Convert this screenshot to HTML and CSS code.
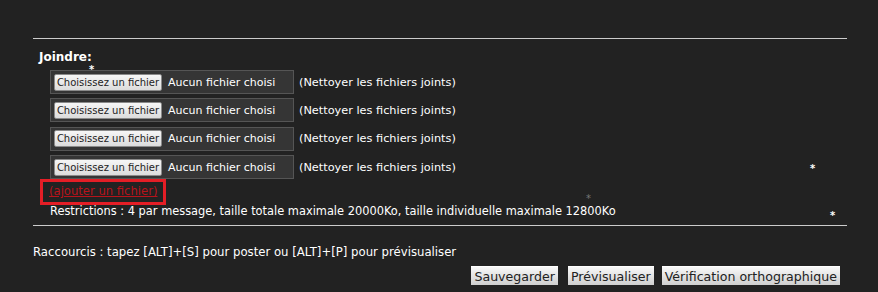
FILE: index.html
```html
<!DOCTYPE html>
<html lang="fr">
<head>
  <meta charset="UTF-8">
  <title>Joindre</title>
  <link rel="stylesheet" href="styles.css">
</head>
<body>
  <div class="page">
    <div class="rule"></div>

    <div class="attach">
      <div class="title">Joindre:</div>

      <div class="files">
        <div class="row">
          <div class="filebox"><span class="pick">Choisissez un fichier</span><span class="none">Aucun fichier choisi</span></div>
          <span class="clean">(Nettoyer les fichiers joints)</span>
        </div>
        <div class="row">
          <div class="filebox"><span class="pick">Choisissez un fichier</span><span class="none">Aucun fichier choisi</span></div>
          <span class="clean">(Nettoyer les fichiers joints)</span>
        </div>
        <div class="row">
          <div class="filebox"><span class="pick">Choisissez un fichier</span><span class="none">Aucun fichier choisi</span></div>
          <span class="clean">(Nettoyer les fichiers joints)</span>
        </div>
        <div class="row">
          <div class="filebox"><span class="pick">Choisissez un fichier</span><span class="none">Aucun fichier choisi</span></div>
          <span class="clean">(Nettoyer les fichiers joints)</span>
        </div>
      </div>

      <div class="add"><a href="#">(ajouter un fichier)</a></div>
      <div class="restrict">Restrictions : 4 par message, taille totale maximale 20000Ko, taille individuelle maximale 12800Ko</div>
    </div>

    <div class="rule"></div>

    <div class="shortcuts">Raccourcis : tapez [ALT]+[S] pour poster ou [ALT]+[P] pour prévisualiser</div>

    <div class="actions">
      <button class="btn">Sauvegarder</button>
      <button class="btn b2">Prévisualiser</button>
      <button class="btn">Vérification orthographique</button>
    </div>
  </div>

  <!-- petites étoiles -->
  <span class="star s1">*</span>
  <span class="star s2">*</span>
  <span class="star s3">*</span>
  <span class="star s4">*</span>
</body>
</html>
```

FILE: styles.css
```css
body {
  margin: 0;
  background: #222222;
  color: #ffffff;
  font-family: 'DejaVu Sans', Verdana, sans-serif;
  font-size: 11px;
  height: 292px;
  overflow: hidden;
  position: relative;
}

.page {
  padding: 38px 31px 0 33px;
}

.rule {
  height: 1px;
  background: #cccccc;
}

.attach {
  padding: 11px 0 0 6px;
  height: 175px;
}

.title {
  font-weight: bold;
  font-size: 12px;
  line-height: 15px;
}

.files {
  margin: 5px 0 0 11px;
  display: flex;
  flex-direction: column;
  gap: 4.4px;
}

.row {
  display: flex;
  align-items: center;
  height: 24px;
}

.filebox {
  box-sizing: border-box;
  width: 244px;
  height: 24px;
  background: #353535;
  border: 1px solid #555555;
  display: flex;
  align-items: center;
  padding-left: 3px;
}

.pick {
  box-sizing: border-box;
  height: 17px;
  width: 108px;
  border: 1px solid #8a8a8a;
  border-radius: 2px;
  background: linear-gradient(#f6f6f6, #dcdcdc);
  color: #222222;
  font-size: 10px;
  line-height: 15px;
  text-align: center;
}

.none {
  margin-left: 6px;
}

.clean {
  margin-left: 5px;
  font-size: 11.3px;
}

.add {
  display: inline-block;
  margin: 0 0 0 1px;
  border: 3px solid #e41e26;
  padding: 2px 6px 3px 6px;
  line-height: 14px;
}

.add a {
  color: #b8131b;
  font-size: 11.6px;
  text-decoration: underline;
}

.restrict {
  margin: 0 0 0 11px;
  font-size: 11.4px;
  line-height: 13px;
}

.shortcuts {
  margin-top: 20px;
  font-size: 11.7px;
  line-height: 13px;
}

.actions {
  display: flex;
  justify-content: flex-end;
  gap: 8px;
  margin: 7px 7px 0 0;
}

.btn {
  height: 19px;
  padding: 0 3px;
  border: none;
  border-top: 1px solid #ffffff;
  background: linear-gradient(#f8f8f8, #cfcfcf);
  color: #222222;
  font-family: 'DejaVu Sans', Verdana, sans-serif;
  font-size: 12.6px;
  line-height: 17px;
}

.b2 {
  margin-left: 2px;
}

.star {
  position: absolute;
  font-size: 10px;
  font-weight: bold;
  line-height: 8px;
  color: #ffffff;
}

.s1 { left: 89px; top: 66px; }
.s2 { left: 810px; top: 165px; }
.s3 { left: 830px; top: 212px; }
.s4 { left: 586px; top: 195px; color: #777777; font-weight: normal; }
```
